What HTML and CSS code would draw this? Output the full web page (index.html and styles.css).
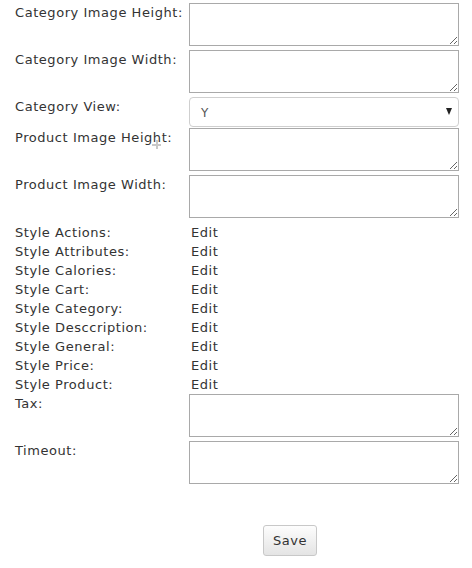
FILE: index.html
```html
<!DOCTYPE html>
<html>
<head>
<meta charset="utf-8">
<link rel="stylesheet" href="styles.css">
</head>
<body>
<form class="settings">
  <div class="row field"><label>Category Image Height:</label><textarea></textarea></div>
  <div class="row field"><label>Category Image Width:</label><textarea></textarea></div>
  <div class="row pick"><label>Category View:</label>
    <div class="select"><span>Y</span><span class="arrow"></span></div>
  </div>
  <div class="row field"><label class="cursor-host">Product Image Height:<span class="cursor"></span></label><textarea></textarea></div>
  <div class="row field last"><label>Product Image Width:</label><textarea></textarea></div>
  <div class="styles">
    <div class="row line"><span>Style Actions:</span><a>Edit</a></div>
    <div class="row line"><span>Style Attributes:</span><a>Edit</a></div>
    <div class="row line"><span>Style Calories:</span><a>Edit</a></div>
    <div class="row line"><span>Style Cart:</span><a>Edit</a></div>
    <div class="row line"><span>Style Category:</span><a>Edit</a></div>
    <div class="row line"><span>Style Desccription:</span><a>Edit</a></div>
    <div class="row line"><span>Style General:</span><a>Edit</a></div>
    <div class="row line"><span>Style Price:</span><a>Edit</a></div>
    <div class="row line"><span>Style Product:</span><a>Edit</a></div>
  </div>
  <div class="row field"><label>Tax:</label><textarea></textarea></div>
  <div class="row field"><label>Timeout:</label><textarea></textarea></div>
  <div class="actions"><button type="button" class="save">Save</button></div>
</form>
</body>
</html>
```
FILE: styles.css
```css
html, body {
  margin: 0;
  padding: 0;
  background: #fff;
}
body {
  font-family: "DejaVu Sans", Verdana, sans-serif;
  font-size: 13px;
  letter-spacing: 0.55px;
  color: #333;
}
.settings {
  padding: 3px 0 0 15px;
  display: flex;
  flex-direction: column;
}
.row {
  display: grid;
  grid-template-columns: 174px 270px;
  align-items: start;
}
.row label, .row span {
  line-height: 16px;
}
.field {
  margin-bottom: 4px;
}
.field label {
  padding-top: 2px;
}
.field textarea {
  box-sizing: border-box;
  width: 270px;
  height: 43px;
  margin: 0;
  border: 1px solid #a9a9a9;
  font: inherit;
  display: block;
}
.pick {
  margin-bottom: 1px;
}
.pick label {
  padding-top: 2px;
}
.select {
  box-sizing: border-box;
  height: 30px;
  border: 1px solid #cfcfcf;
  border-radius: 4px;
  display: flex;
  align-items: center;
  justify-content: space-between;
  padding: 0 6px 0 11px;
  color: #555;
  font-size: 12px;
}
.select span {
  padding-top: 2px;
}
.arrow {
  width: 0;
  height: 0;
  border-left: 3.5px solid transparent;
  border-right: 3.5px solid transparent;
  border-top: 7px solid #222;
}
.styles {
  padding-top: 1px;
  padding-bottom: 0;
  display: flex;
  flex-direction: column;
}
.line {
  height: 19px;
  align-items: center;
}
.line a {
  padding-left: 2px;
  color: #333;
  line-height: 16px;
}
.cursor-host {
  position: relative;
}
.cursor {
  position: absolute;
  left: 137px;
  top: 12px;
  width: 9px;
  height: 9px;
  background:
    linear-gradient(#c8c8c8, #c8c8c8) center / 9px 2px no-repeat,
    linear-gradient(#c8c8c8, #c8c8c8) center / 2px 9px no-repeat;
}
.actions {
  padding: 37px 0 0 248px;
}
.save {
  box-sizing: border-box;
  width: 54px;
  height: 31px;
  border: 1px solid #c8c8c8;
  border-radius: 3px;
  background: linear-gradient(#fdfdfd, #e4e4e4);
  font-family: "DejaVu Sans", Verdana, sans-serif;
  font-size: 13px;
  letter-spacing: 0.5px;
  color: #333;
  padding: 0;
}
```
